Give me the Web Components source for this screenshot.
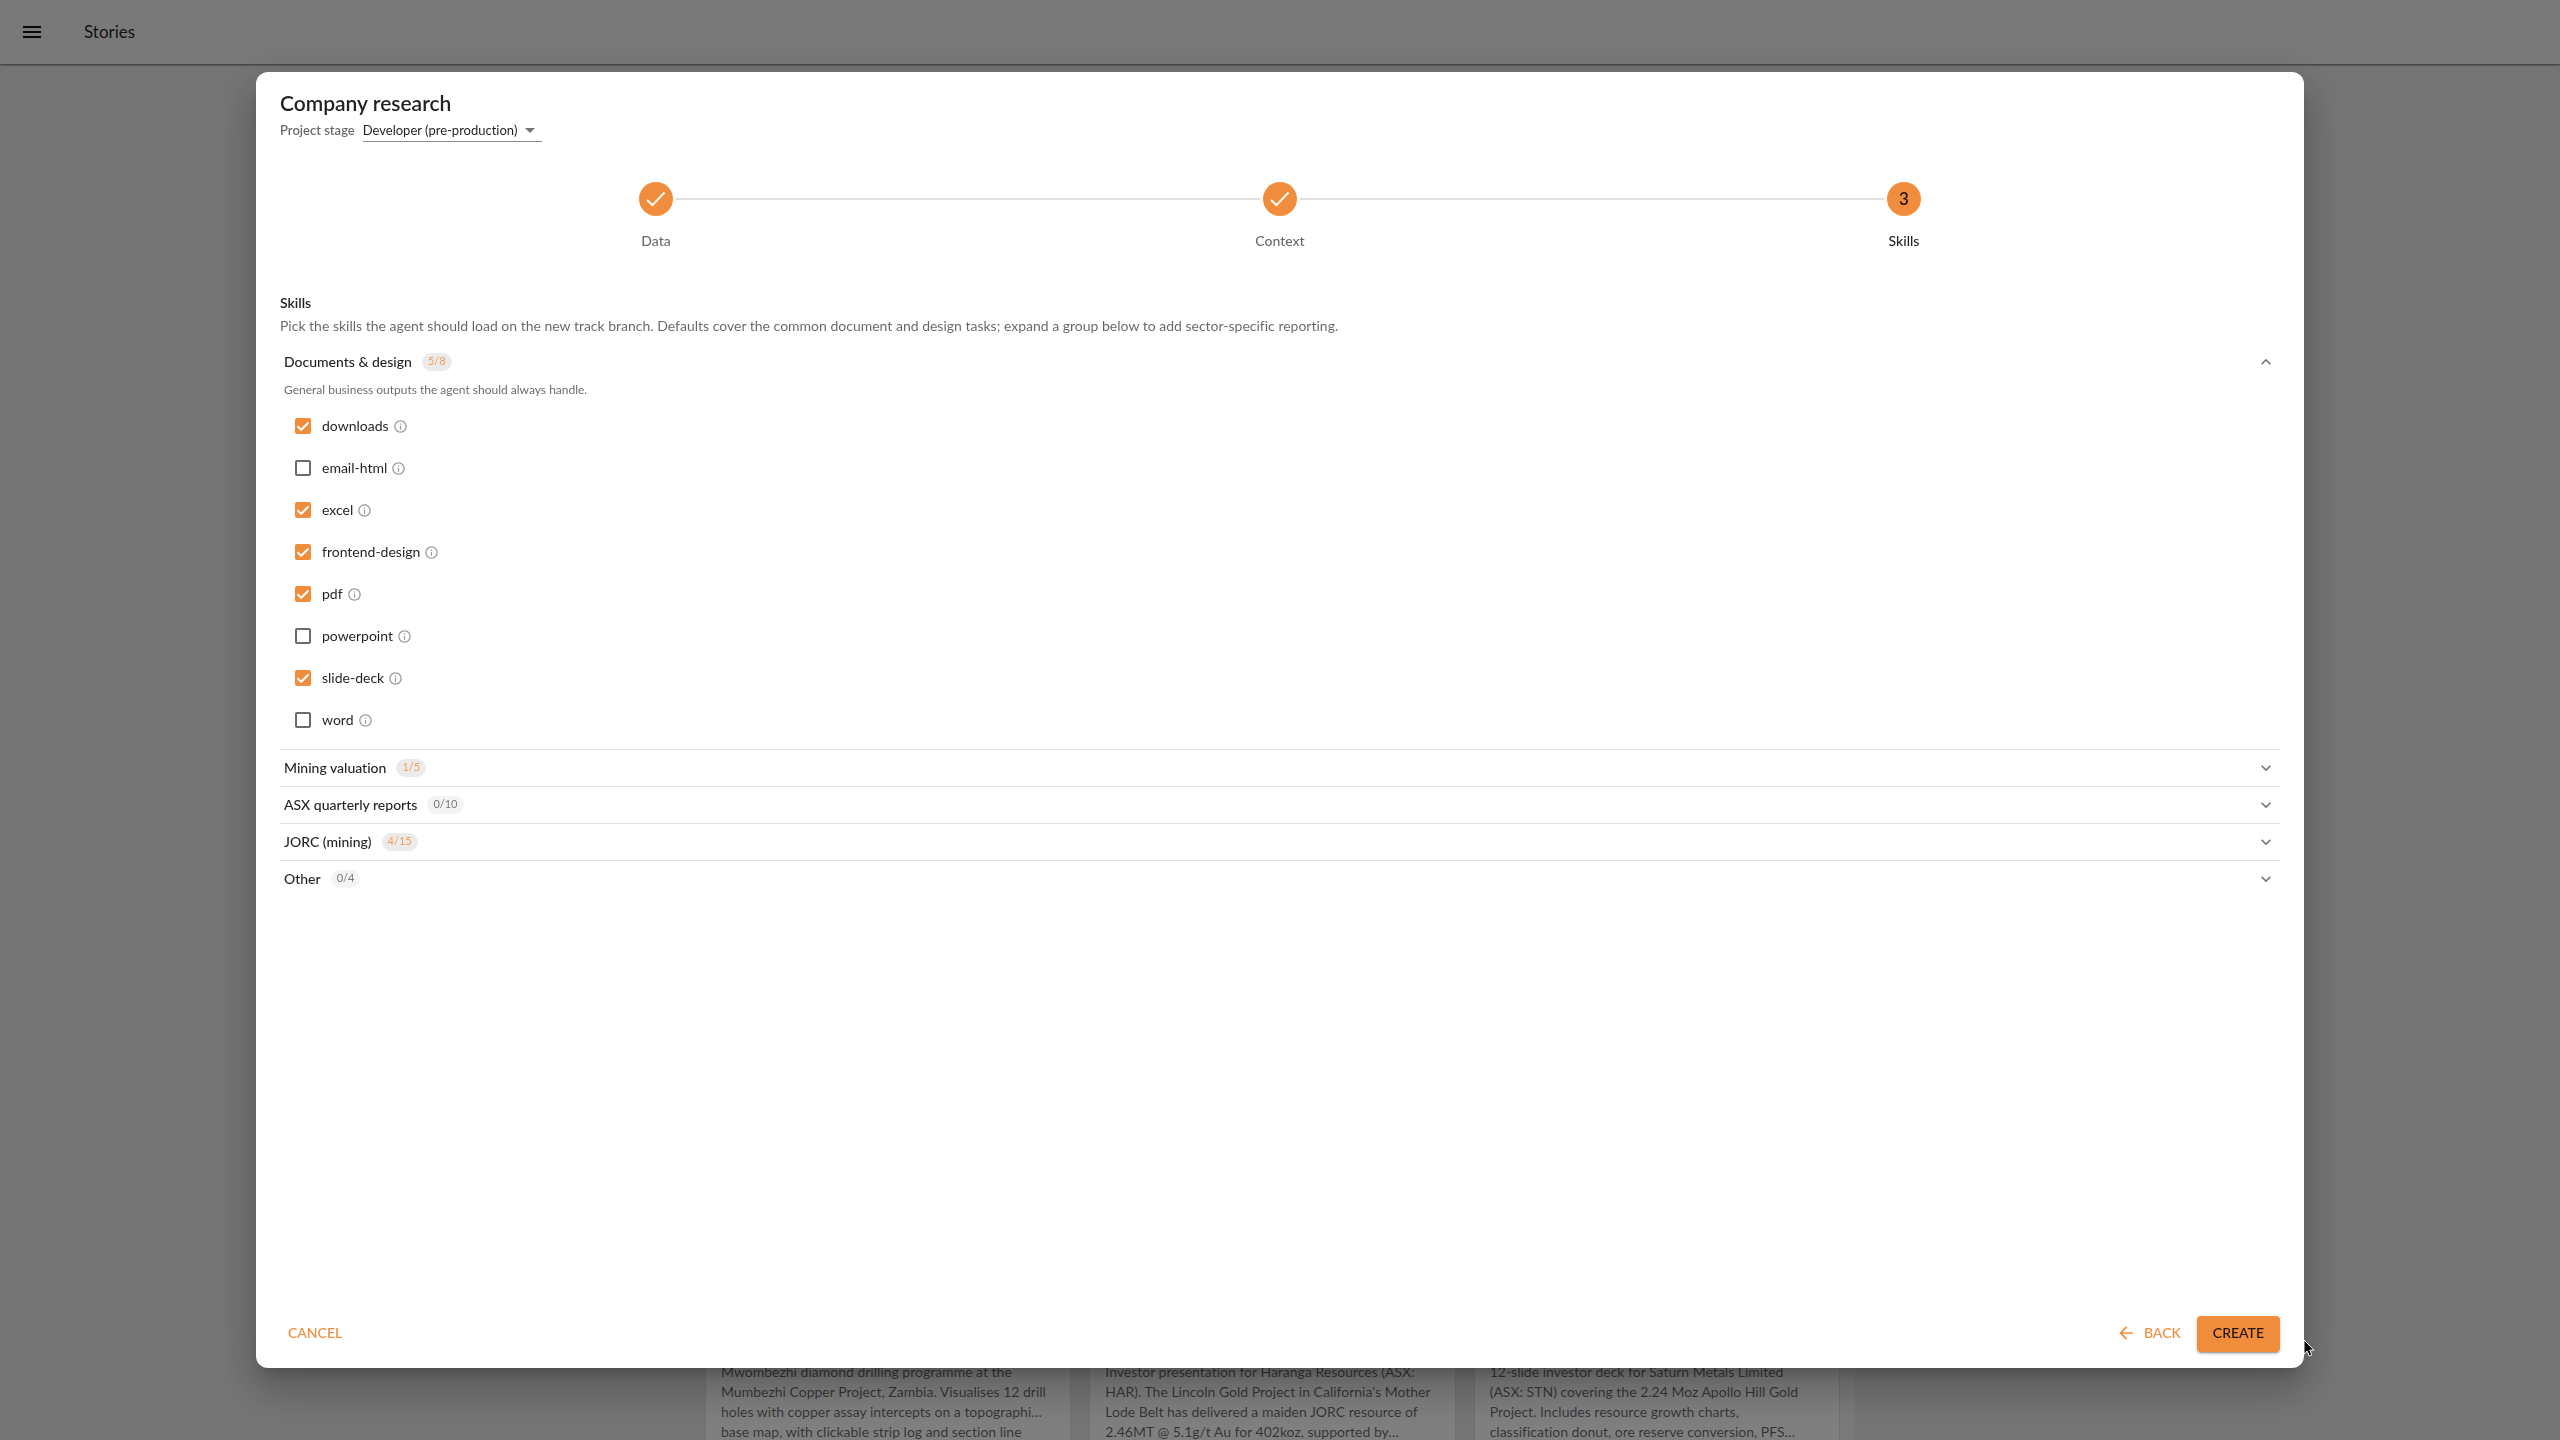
<!DOCTYPE html>
<html lang="en">
<head>
<meta charset="utf-8">
<title>Stories</title>
<style>
  :root {
    --accent: #f08d3c;
    --ink: rgba(0, 0, 0, .87);
    --muted: rgba(0, 0, 0, .6);
    --line: #e0e0e0;
  }
  body {
    margin: 0;
    font-family: Lato, "Open Sans", sans-serif;
    font-size: 14px;
    line-height: 20px;
    font-variant-ligatures: none;
    color: var(--ink);
    background: #ebebeb;
  }
</style>
</head>
<body>
<story-app></story-app>

<script>
const define = (name, html, setup) => {
  const template = document.createElement('template');
  template.innerHTML = html;
  customElements.define(name, class extends HTMLElement {
    constructor() {
      super();
      this.attachShadow({ mode: 'open' }).append(template.content.cloneNode(true));
    }
    connectedCallback() {
      if (setup && !this.ready) {
        this.ready = true;
        setup(this, this.shadowRoot);
      }
    }
  });
};

define('app-bar', `
  <style>
    :host { display: flex; align-items: center; gap: 40px; height: 64px; padding: 0 20px; flex: none;
      background: #f2f2f2; box-shadow: 0 1px 2px rgba(0, 0, 0, .6); position: relative; font-size: 17px; line-height: 24px; }
    button { display: flex; padding: 0; border: 0; background: none; color: #111; }
    svg { width: 24px; height: 24px; fill: currentColor; }
  </style>
  <button aria-label="Menu"><svg viewBox="0 0 24 24"><path d="M3 18h18v-2H3v2zm0-5h18v-2H3v2zm0-7v2h18V6H3z"/></svg></button>
  <span><slot></slot></span>
`);

define('story-card', `
  <style>
    :host { display: block; background: #fff; padding: 640px 15px 0; border: 1px solid #e4e4e4; border-width: 0 1px;
      color: var(--muted); }
    slot { white-space: pre; }
  </style>
  <slot></slot>
`);

define('wizard-step', `
  <style>
    :host { display: flex; flex-direction: column; align-items: center; gap: 15px; flex: 1; color: var(--muted); font-weight: 500; }
    :host([active]) { color: var(--ink); }
    .rail { display: flex; align-items: center; align-self: stretch; gap: 3px; }
    .rail i { flex: 1; height: 2px; }
    :host(:not(:first-child)) i.before, :host(:not(:last-child)) i.after { background: var(--line); }
    .dot { display: grid; place-items: center; width: 34px; height: 34px; border-radius: 50%; background: var(--accent);
      color: #1f1208; font-size: 17px; font-weight: 600; }
    svg { width: 24px; height: 24px; fill: none; stroke: #fff; stroke-width: 2; }
    :host([active]) svg, :host(:not([active])) .num { display: none; }
  </style>
  <div class="rail"><i class="before"></i>
    <span class="dot"><svg viewBox="0 0 24 24"><path d="M3 13 8.500 18.200 20.500 5.500"/></svg><span class="num"></span></span>
  <i class="after"></i></div>
  <span><slot></slot></span>
`, (host, root) => {
  root.querySelector('.num').textContent = host.getAttribute('number');
});

define('skill-option', `
  <style>
    :host { display: flex; align-items: center; gap: 4px; height: 42px; padding-left: 8px; }
    label { display: flex; align-items: center; gap: 8px; }
    .box { display: grid; place-items: center; width: 22px; height: 22px; }
    .box > * { grid-area: 1 / 1; }
    input { appearance: none; box-sizing: border-box; width: 16px; height: 16px; margin: 0; border: 2px solid #6b6b6b; border-radius: 2px; }
    input:checked { background: var(--accent); border-color: var(--accent); }
    .tick { width: 14px; height: 14px; fill: none; stroke: #fff; stroke-width: 2; pointer-events: none; }
    input:not(:checked) + .tick { display: none; }
    .info { width: 15px; height: 15px; fill: #999; }
  </style>
  <label><span class="box"><input type="checkbox"><svg class="tick" viewBox="0 0 14 14"><path d="M1.500 7.200 5.200 10.800 12.500 3.500"/></svg></span><span><slot></slot></span></label>
  <svg class="info" viewBox="0 0 24 24"><path d="M11 7h2v2h-2zm0 4h2v6h-2zm1-9C6.480 2 2 6.480 2 12s4.480 10 10 10 10-4.480 10-10S17.520 2 12 2zm0 18c-4.410 0-8-3.590-8-8s3.590-8 8-8 8 3.590 8 8-3.590 8-8 8z"/></svg>
`, (host, root) => {
  root.querySelector('input').checked = host.hasAttribute('checked');
});

define('skill-group', `
  <style>
    :host { display: block; border-bottom: 1px solid var(--line); }
    :host(:last-child) { border-bottom: 0; }
    button { display: flex; align-items: center; gap: 10px; width: 100%; height: 36px; padding: 0 4px; border: 0;
      background: none; font: inherit; font-weight: 500; color: inherit; text-align: left; }
    .count { padding: 0 6px; height: 18px; border-radius: 9px; background: #f4f4f4; color: #777; font-size: 11px; line-height: 16px; font-weight: 400; }
    .count.some { background: #ebebeb; color: #f3a058; }
    .chevron { width: 20px; height: 20px; margin-left: auto; fill: #757575; }
    .body { padding: 0 4px 8px; }
    .desc { margin: 0 0 5px; color: var(--muted); font-size: 12px; line-height: 20px; }
    :host([open]) .chevron { transform: rotate(180deg); }
    :host(:not([open])) .body { display: none; }
  </style>
  <button><span class="name"></span><span class="count"></span>
    <svg class="chevron" viewBox="0 0 24 24"><path d="M7.410 8.590 12 13.170l4.590-4.580L18 10l-6 6-6-6z"/></svg></button>
  <div class="body"><p class="desc"></p><slot></slot></div>
`, (host, root) => {
  const count = host.getAttribute('count');
  root.querySelector('.name').textContent = host.getAttribute('name');
  root.querySelector('.count').textContent = count;
  root.querySelector('.count').classList.toggle('some', !count.startsWith('0/'));
  root.querySelector('.desc').textContent = host.getAttribute('description') || '';
  const button = root.querySelector('button');
  const sync = () => button.setAttribute('aria-expanded', host.hasAttribute('open'));
  button.addEventListener('click', () => { host.toggleAttribute('open'); sync(); });
  sync();
});

define('action-button', `
  <style>
    :host { display: block; }
    button { display: flex; align-items: center; gap: 8px; height: 36px; padding: 0 8px 2px; border: 0; border-radius: 4px;
      background: none; color: var(--accent); font: inherit; font-weight: 500; }
    :host([primary]) button { padding: 0 16px 2px; background: var(--accent); color: #1f1208;
      box-shadow: 0 3px 1px -2px rgba(0,0,0,.2), 0 2px 2px rgba(0,0,0,.14), 0 1px 5px rgba(0,0,0,.12); }
  </style>
  <button><slot name="icon"></slot><slot></slot></button>
`);

define('research-dialog', `
  <style>
    :host { display: flex; flex-direction: column; box-sizing: border-box; width: 80%; height: 90%; padding: 0 24px 16px; border-radius: 12px;
      background: #fff; box-shadow: 0 11px 15px -7px rgba(0,0,0,.2), 0 24px 38px 3px rgba(0,0,0,.14), 0 9px 46px 8px rgba(0,0,0,.12); }
    h1 { margin: 0; padding-top: 16px; font-size: 21px; line-height: 30px; font-weight: 600; }
    .stage { display: flex; align-items: center; gap: 8px; height: 24px; }
    .stage label { color: var(--muted); font-size: 13px; font-weight: 600; }
    .pick { display: grid; align-items: center; border-bottom: 1px solid #8a8a8a; }
    .pick > * { grid-area: 1 / 1; }
    select { appearance: none; border: 0; padding: 0 24px 0 0; margin: 0; background: none; font: inherit; font-size: 13px; height: 23px; color: inherit; }
    .caret { width: 24px; height: 24px; margin: -2px 0; justify-self: end; fill: #757575; pointer-events: none; }
    .steps { display: flex; padding: 40px 64px 0; }
    h2 { margin: 0; padding-top: 42px; font-size: 14px; line-height: 20px; font-weight: 600; }
    .intro { margin: 0; padding: 3px 0 8px; color: var(--muted); }
    footer { display: flex; align-items: center; gap: 8px; margin-top: auto; }
    .back { margin-left: auto; }
    .arrow { width: 20px; height: 20px; fill: currentColor; }
  </style>
  <h1>Company research</h1>
  <div class="stage"><label for="stage">Project stage</label>
    <span class="pick"><select id="stage"><option>Developer (pre-production)</option></select>
    <svg class="caret" viewBox="0 0 24 24"><path d="M7 10l5 5 5-5z"/></svg></span></div>
  <div class="steps">
    <wizard-step>Data</wizard-step><wizard-step>Context</wizard-step><wizard-step number="3" active>Skills</wizard-step>
  </div>
  <h2>Skills</h2>
  <p class="intro">Pick the skills the agent should load on the new track branch. Defaults cover the common document and design tasks; expand a group below to add sector-specific reporting.</p>
  <div class="groups">
    <skill-group open name="Documents &amp; design" count="5/8" description="General business outputs the agent should always handle.">
      <skill-option checked>downloads</skill-option>
      <skill-option>email-html</skill-option>
      <skill-option checked>excel</skill-option>
      <skill-option checked>frontend-design</skill-option>
      <skill-option checked>pdf</skill-option>
      <skill-option>powerpoint</skill-option>
      <skill-option checked>slide-deck</skill-option>
      <skill-option>word</skill-option>
    </skill-group>
    <skill-group name="Mining valuation" count="1/5"></skill-group>
    <skill-group name="ASX quarterly reports" count="0/10"></skill-group>
    <skill-group name="JORC (mining)" count="4/15"></skill-group>
    <skill-group name="Other" count="0/4"></skill-group>
  </div>
  <footer>
    <action-button>CANCEL</action-button>
    <action-button class="back"><svg slot="icon" class="arrow" viewBox="0 0 24 24"><path d="M20 11H7.830l5.590-5.590L12 4l-8 8 8 8 1.410-1.410L7.830 13H20v-2z"/></svg>BACK</action-button>
    <action-button primary>CREATE</action-button>
  </footer>
`);

define('story-app', `
  <style>
    :host { display: flex; flex-direction: column; height: 100vh; overflow: hidden; }
    main { flex: 1; min-height: 0; display: flex; align-items: flex-end; justify-content: center; }
    .cards { display: grid; grid-template-columns: repeat(3, minmax(0, 1fr)); gap: 18px; box-sizing: border-box; width: 100%; max-width: 1150px;
      border-right: 15px solid #f4f4f4; margin-bottom: -2px; }
    .scrim { position: fixed; inset: 0; display: grid; place-items: center; background: rgba(0, 0, 0, .5); }
    .pointer { position: fixed; left: 2303px; top: 1339px; width: 12px; height: 19px; }
  </style>
  <app-bar>Stories</app-bar>
  <main><div class="cards">
    <story-card>Mwombezhi diamond drilling programme at the
Mumbezhi Copper Project, Zambia. Visualises 12 drill
holes with copper assay intercepts on a topographi…
base map, with clickable strip log and section line</story-card>
    <story-card>Investor presentation for Haranga Resources (ASX:
HAR). The Lincoln Gold Project in California's Mother
Lode Belt has delivered a maiden JORC resource of
2.46MT @ 5.1g/t Au for 402koz, supported by…</story-card>
    <story-card>12-slide investor deck for Saturn Metals Limited
(ASX: STN) covering the 2.24 Moz Apollo Hill Gold
Project. Includes resource growth charts,
classification donut, ore reserve conversion, PFS…</story-card>
  </div></main>
  <div class="scrim"><research-dialog></research-dialog></div>
  <svg class="pointer" viewBox="0 0 12 19"><path d="M1 1v14.200l3.200-3 2 4.800 2.600-1.100-2-4.700H11z" fill="#000" stroke="#fff"/></svg>
`);
</script>
</body>
</html>
